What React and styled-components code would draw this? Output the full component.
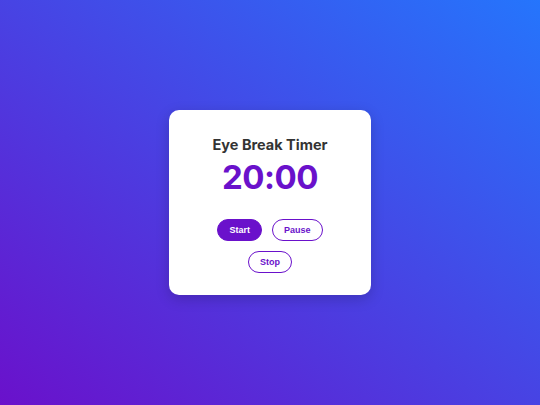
import React from "react";
import styled, { createGlobalStyle } from "styled-components";

const GlobalStyle = createGlobalStyle`
  html, body {
    margin: 0;
    padding: 0;
  }
  body {
    font-family: "Inter", "Liberation Sans", sans-serif;
  }
`;

const Page = styled.div`
  width: 100vw;
  height: 100vh;
  background: linear-gradient(to top right, #6a11cb 0%, #2575fc 100%);
  display: flex;
  align-items: center;
  justify-content: center;
`;

const Card = styled.div`
  width: 202px;
  box-sizing: border-box;
  background: #fff;
  border-radius: 10px;
  padding: 26px 0 22px;
  box-shadow: 0 4px 14px rgba(0, 0, 0, 0.18);
  display: flex;
  flex-direction: column;
  align-items: center;
`;

const Title = styled.h2`
  margin: 0;
  font-size: 14.5px;
  line-height: 18px;
  font-weight: 700;
  color: #333;
`;

const Time = styled.div`
  margin-top: 5px;
  font-size: 33px;
  line-height: 36px;
  font-weight: 700;
  letter-spacing: -0.5px;
  color: #6a11cb;
`;

const Controls = styled.div`
  margin-top: 24px;
  display: flex;
  flex-wrap: wrap;
  justify-content: center;
  gap: 10px;
  width: 130px;
`;

const Button = styled.button`
  height: 22px;
  box-sizing: border-box;
  padding: 0 11px;
  border-radius: 11px;
  border: 1px solid #6a11cb;
  background: ${(p) => (p.primary ? "#6a11cb" : "#fff")};
  color: ${(p) => (p.primary ? "#fff" : "#6a11cb")};
  font-family: "Liberation Sans", Arial, sans-serif;
  font-weight: 700;
  font-size: 9px;
  cursor: pointer;
`;

export default function App() {
  return (
    <>
      <GlobalStyle />
      <Page>
        <Card>
          <Title>Eye Break Timer</Title>
          <Time>20:00</Time>
          <Controls>
            <Button primary>Start</Button>
            <Button>Pause</Button>
            <Button>Stop</Button>
          </Controls>
        </Card>
      </Page>
    </>
  );
}
